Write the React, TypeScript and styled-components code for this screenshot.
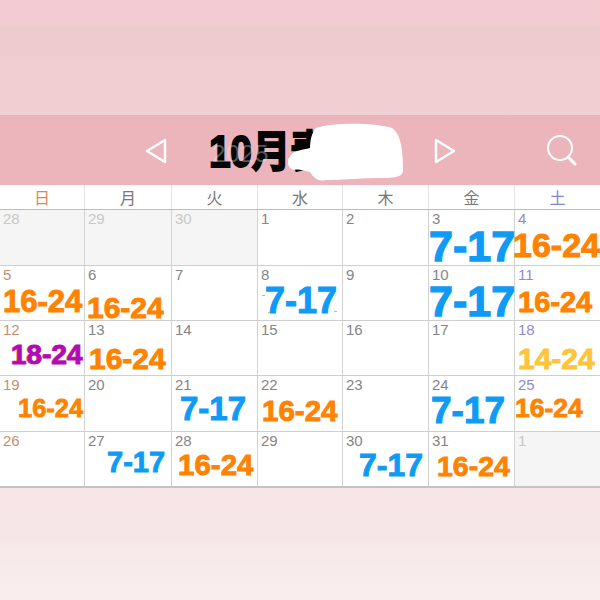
import { FC } from "react";
import styled, { createGlobalStyle } from "styled-components";

interface Shift {
  text: string;
  color: string;
  x: number;
  y: number;
  size: number;
  ghost?: boolean;
}
interface Day {
  n: number;
  muted?: boolean;
  shift?: Shift;
  specks?: [number, number][];
}

const BLUE = "#0f9bf5";
const ORANGE = "#ff8200";
const PURPLE = "#b10ab8";
const YELLOW = "#fdc53e";

const orange = (x: number, y: number, size: number): Shift => ({ text: "16-24", color: ORANGE, x, y, size });
const blue = (x: number, y: number, size: number): Shift => ({ text: "7-17", color: BLUE, x, y, size });

const weekdays = ["日", "月", "火", "水", "木", "金", "土"];
const colWidths = "85px 87px 86px 85px 86px 86px 85px";

const rows: Day[][] = [
  [
    { n: 28, muted: true },
    { n: 29, muted: true },
    { n: 30, muted: true },
    { n: 1 },
    { n: 2 },
    { n: 3, shift: blue(0, 15, 43) },
    { n: 4, shift: orange(-2, 18, 34) },
  ],
  [
    { n: 5, shift: orange(3, 20, 31) },
    { n: 6, shift: orange(2, 27, 30) },
    { n: 7 },
    { n: 8, shift: blue(7, 17, 36), specks: [[4, 29], [10, 46], [76, 45]] },
    { n: 9 },
    { n: 10, shift: blue(0, 14, 43) },
    { n: 11, shift: orange(3, 22, 29) },
  ],
  [
    { n: 12, shift: { text: "18-24", color: PURPLE, x: 11, y: 20, size: 28, ghost: true } },
    { n: 13, shift: orange(4, 23, 30) },
    { n: 14 },
    { n: 15 },
    { n: 16 },
    { n: 17 },
    { n: 18, shift: { text: "14-24", color: YELLOW, x: 3, y: 23, size: 30 } },
  ],
  [
    { n: 19, shift: orange(18, 20, 25.5) },
    { n: 20 },
    { n: 21, shift: blue(8, 16, 33) },
    { n: 22, shift: orange(4, 20, 29.5) },
    { n: 23 },
    { n: 24, shift: blue(2, 16, 37) },
    { n: 25, shift: orange(0, 19, 26.5) },
  ],
  [
    { n: 26 },
    { n: 27, shift: blue(22, 16, 29) },
    { n: 28, shift: orange(6, 18, 29.5) },
    { n: 29 },
    { n: 30, shift: blue(16, 17, 32) },
    { n: 31, shift: orange(8, 20, 28.5) },
    { n: 1, muted: true },
  ],
];

const GlobalStyle = createGlobalStyle`
  html, body {
    margin: 0;
    padding: 0;
    background: #fff;
  }
`;

const Page = styled.div`
  width: 600px;
  height: 600px;
  display: flex;
  flex-direction: column;
  overflow: hidden;
  font-family: "Liberation Sans", "Noto Sans CJK JP", sans-serif;
`;

const TopBand = styled.div`
  height: 115px;
  background: linear-gradient(
    to bottom,
    #f3cbd2 0,
    #f2ccd2 24px,
    #eecbcf 28px,
    #eecbcf 55px,
    #efcdd1 60px,
    #f0ced2 108px,
    #f1d0d4 115px
  );
`;

const Header = styled.div`
  height: 70px;
  background: #ecb5bb;
  position: relative;
`;

const NavIcon = styled.svg`
  position: absolute;
  top: 0;
  left: 0;
  width: 600px;
  height: 70px;
`;

const Title = styled.div`
  position: absolute;
  left: 209px;
  top: 13px;
  font-size: 39px;
  line-height: 48px;
  font-weight: 700;
  color: #050505;
  -webkit-text-stroke: 1.6px #050505;
  letter-spacing: -0.5px;
  white-space: nowrap;
  transform: scaleY(1.12);
`;

const YearGhost = styled.div`
  position: absolute;
  z-index: 1;
  left: 212px;
  top: 25px;
  font-size: 24px;
  line-height: 28px;
  letter-spacing: 1px;
  color: rgba(250, 235, 237, 0.35);
  white-space: nowrap;
`;

const WeekRow = styled.div`
  height: 24px;
  display: grid;
  grid-template-columns: ${colWidths};
  background: #fff;
  border-bottom: 1px solid #bdbdbd;
`;

const WeekCell = styled.div<{ $color: string }>`
  display: flex;
  align-items: center;
  justify-content: center;
  font-size: 16px;
  color: ${(p) => p.$color};
  border-right: 1px solid #e4e4e4;
  &:last-child {
    border-right: 0;
  }
`;

const Grid = styled.div`
  height: 276px;
  display: grid;
  grid-template-columns: ${colWidths};
  grid-template-rows: 56px 55px 55px 56px 54px;
  background: #fff;
  border-bottom: 2px solid #c4c4c4;
`;

const Cell = styled.div<{ $muted?: boolean }>`
  position: relative;
  background: ${(p) => (p.$muted ? "#f5f5f5" : "#fff")};
  border-right: 1px solid #d2d2d2;
  border-bottom: 1px solid #cfcfcf;
  &:nth-child(7n) {
    border-right: 0;
  }
  &:nth-last-child(-n + 7) {
    border-bottom: 0;
  }
`;

const DayNum = styled.span<{ $color: string }>`
  position: absolute;
  left: 3px;
  top: 1px;
  font-size: 15px;
  line-height: 16px;
  color: ${(p) => p.$color};
`;

const ShiftLabel = styled.span<{ $color: string; $x: number; $y: number; $size: number; $ghost?: boolean }>`
  position: absolute;
  z-index: 2;
  left: ${(p) => p.$x}px;
  top: ${(p) => p.$y}px;
  font-size: ${(p) => p.$size}px;
  line-height: 1;
  font-weight: 700;
  white-space: nowrap;
  color: ${(p) => p.$color};
  -webkit-text-stroke: ${(p) => (p.$size * 0.03).toFixed(2)}px ${(p) => p.$color};
  text-shadow: ${(p) => (p.$ghost ? `-1px 0 0 ${ORANGE}` : "none")};
`;

const Speck = styled.i`
  position: absolute;
  width: 3px;
  height: 1px;
  background: #f7a860;
`;

const BottomBand = styled.div`
  flex: 1;
  background: linear-gradient(to bottom, #f7e4e7 0, #f6e6e7 50px, #f8ebeb 80px, #f9eded 114px);
`;

const Scribble = styled.svg`
  position: absolute;
  z-index: 2;
  left: 280px;
  top: 5px;
  width: 130px;
  height: 70px;
`;

const dayColor = (col: number, muted?: boolean) => {
  if (muted) return "#c8c8c8";
  if (col === 0) return "#c48f72";
  if (col === 6) return "#8f8ad0";
  return "#858585";
};

const weekColor = (col: number) => {
  if (col === 0) return "#d68a55";
  if (col === 6) return "#8585d8";
  return "#777";
};

const App: FC = () => (
  <Page>
    <GlobalStyle />
    <TopBand />
    <Header>
      <Title>10月表</Title>
      <YearGhost>2025</YearGhost>
      <NavIcon viewBox="0 0 600 70" fill="none" stroke="#fff" strokeWidth="2.5" strokeLinejoin="round" strokeLinecap="round">
        <path d="M165 25 L147 36 L165 47 Z" />
        <path d="M436 25 L454 36 L436 47 Z" />
        <circle cx="560" cy="33" r="12" strokeWidth="2" />
        <path d="M568 42 L575 49" strokeWidth="3" />
      </NavIcon>
      <Scribble viewBox="0 0 130 70">
        <path
          d="M36 8 C55 2 95 3 112 8 C121 14 123 30 123 50 C123 58 112 58 100 58 C80 58 62 60 46 60 C38 62 34 58 30 52 C22 50 18 49 14 50 C6 48 7 38 11 35 C16 30 22 30 30 28 C30 20 32 12 36 8 Z"
          fill="#fff"
        />
      </Scribble>
    </Header>
    <WeekRow>
      {weekdays.map((w, i) => (
        <WeekCell key={w} $color={weekColor(i)}>
          {w}
        </WeekCell>
      ))}
    </WeekRow>
    <Grid>
      {rows.flat().map((d, i) => (
        <Cell key={i} $muted={d.muted}>
          <DayNum $color={dayColor(i % 7, d.muted)}>{d.n}</DayNum>
          {d.shift && (
            <ShiftLabel
              $color={d.shift.color}
              $x={d.shift.x}
              $y={d.shift.y}
              $size={d.shift.size}
              $ghost={d.shift.ghost}
            >
              {d.shift.text}
            </ShiftLabel>
          )}
          {d.specks?.map(([x, y]) => (
            <Speck key={x} style={{ left: x, top: y }} />
          ))}
        </Cell>
      ))}
    </Grid>
    <BottomBand />
  </Page>
);

export default App;
